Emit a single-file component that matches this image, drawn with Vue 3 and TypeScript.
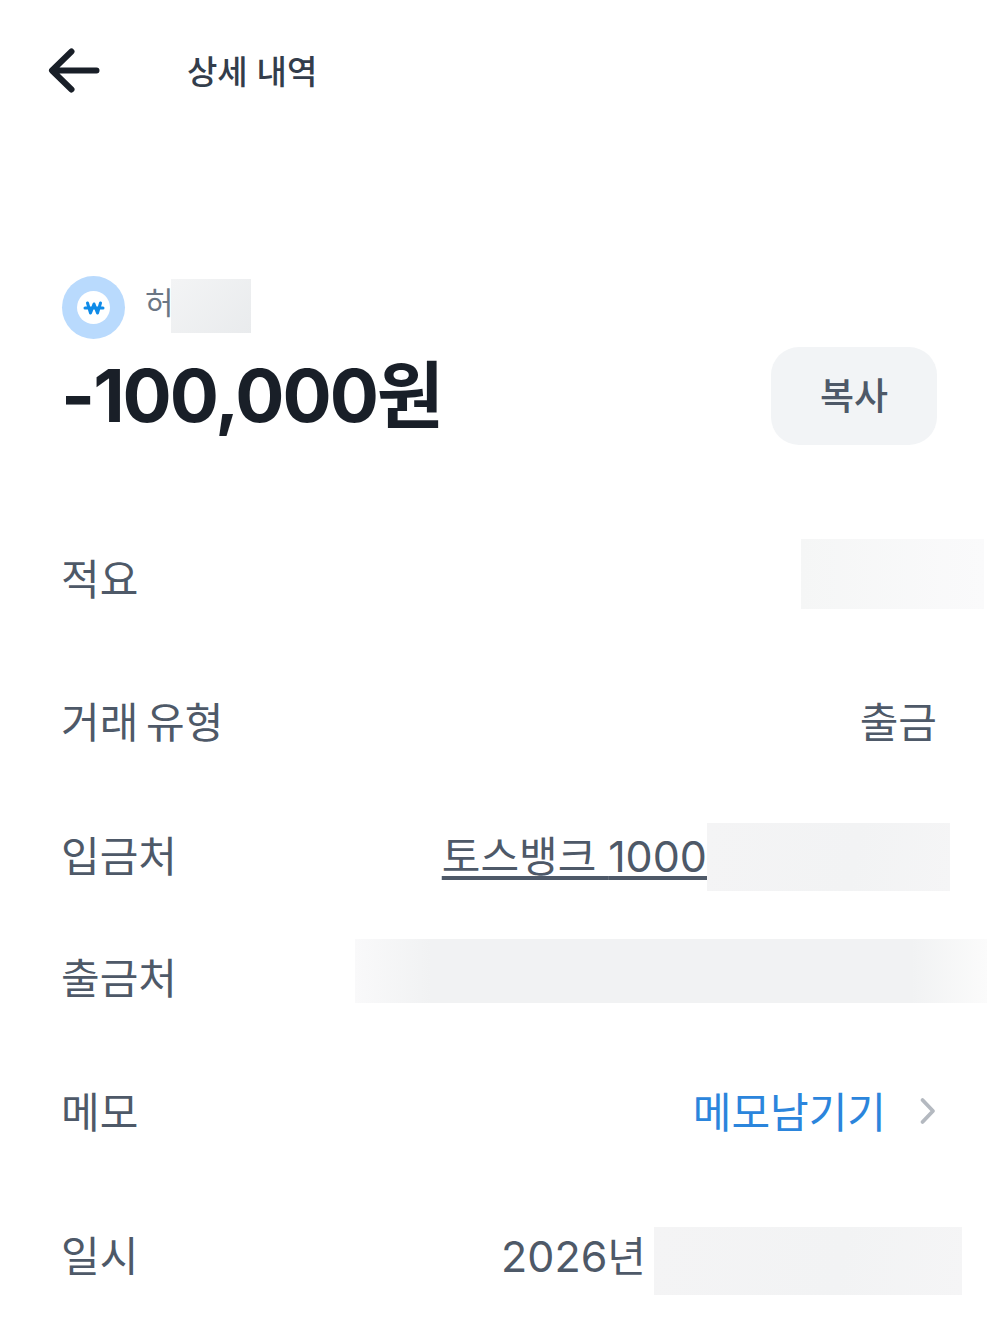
<script setup lang="ts">
interface Row {
  label: string
  kind: string
  height: number
}

const rows: Row[] = [
  { label: '적요', kind: 'summary', height: 134 },
  { label: '거래 유형', kind: 'type', height: 152 },
  { label: '입금처', kind: 'to', height: 116 },
  { label: '출금처', kind: 'from', height: 129 },
  { label: '메모', kind: 'memo', height: 138 },
  { label: '일시', kind: 'date', height: 150 },
]
</script>

<template>
  <div class="page">
    <header class="topbar">
      <button class="back" aria-label="뒤로">
        <svg width="52" height="46" viewBox="0 0 52 46" fill="none">
          <path d="M23.5 4.5 4 23.5l19.5 19M6 23.5H48.5" stroke="#191f28" stroke-width="6" stroke-linecap="round" stroke-linejoin="round" />
        </svg>
      </button>
      <h1>상세 내역</h1>
    </header>

    <section class="summary">
      <div class="account">
        <span class="badge">
          <span class="badge-inner">
            <svg width="22" height="16" viewBox="0 0 22 16" fill="none">
              <path d="M2 8h18M4.5 3 7.5 13 11 4l3.5 9 3-10" stroke="#0f8be8" stroke-width="3" stroke-linecap="round" stroke-linejoin="round" />
            </svg>
          </span>
        </span>
        <span class="account-name">허<span class="blur blur-name"></span></span>
      </div>
      <div class="amount-row">
        <strong class="amount">-100,000원</strong>
        <button class="copy">복사</button>
      </div>
    </section>

    <dl class="details">
      <div v-for="row in rows" :key="row.kind" class="row" :style="{ height: row.height + 'px' }">
        <dt>{{ row.label }}</dt>
        <dd>
          <span v-if="row.kind === 'summary'" class="blur blur-summary"></span>
          <template v-else-if="row.kind === 'type'">출금</template>
          <span v-else-if="row.kind === 'to'" class="inline">
            <span class="link">토스뱅크 <span class="num">1000</span></span><span class="blur blur-to"></span>
          </span>
          <span v-else-if="row.kind === 'from'" class="blur blur-from"></span>
          <span v-else-if="row.kind === 'memo'" class="memo">
            메모남기기
            <svg width="18" height="30" viewBox="0 0 18 30" fill="none">
              <path d="M3.5 4 14 15 3.5 26" stroke="#b4b9c0" stroke-width="3.8" stroke-linecap="round" stroke-linejoin="round" />
            </svg>
          </span>
          <span v-else class="inline">
            <span><span class="num">2026</span>년</span><span class="blur blur-date"></span>
          </span>
        </dd>
      </div>
    </dl>
  </div>
</template>

<style scoped>
.page {
  width: 1000px;
  height: 1333px;
  overflow: hidden;
  background: #fff;
  color: #4e5968;
  font-family: Inter, "Noto Sans CJK KR", sans-serif;
}

.topbar {
  display: flex;
  align-items: center;
  height: 46px;
  padding: 47px 0 0 48px;
}

.back {
  display: flex;
  padding: 0;
  border: 0;
  background: none;
}

h1 {
  margin: 0 0 0 87px;
  font-size: 33px;
  font-weight: 500;
  color: #333d4b;
}

.summary {
  padding: 183px 63px 0 62px;
}

.account {
  display: flex;
  align-items: center;
  gap: 20px;
}

.badge {
  display: flex;
  align-items: center;
  justify-content: center;
  width: 63px;
  height: 63px;
  border-radius: 50%;
  background: #b9dafd;
}

.badge-inner {
  display: flex;
  align-items: center;
  justify-content: center;
  width: 33px;
  height: 33px;
  border-radius: 50%;
  background: #fff;
}

.account-name {
  position: relative;
  margin-bottom: 14px;
  font-size: 31px;
  color: #6b7684;
}

.amount-row {
  display: flex;
  align-items: center;
  justify-content: space-between;
  height: 106px;
  margin-top: 4px;
}

.amount {
  margin-left: -1px;
  padding-bottom: 12px;
  font-size: 73px;
  font-weight: 700;
  letter-spacing: -2px;
  color: #191f28;
}

.copy {
  width: 166px;
  height: 98px;
  padding: 0 0 4px;
  border: 0;
  border-radius: 28px;
  background: #f2f4f6;
  font: 500 37px Inter, "Noto Sans CJK KR", sans-serif;
  color: #4e5968;
}

.details {
  margin: 60px 0 0;
  padding: 0 63px 0 61px;
}

.row {
  display: flex;
  align-items: center;
  justify-content: space-between;
  font-size: 42px;
}

dt {
  word-spacing: -4px;
}

dd {
  position: relative;
  display: flex;
  justify-content: flex-end;
  margin: 0;
}

.inline {
  display: flex;
  align-items: center;
}

.num {
  font-size: 43px;
}

.link {
  text-decoration: underline;
  text-underline-offset: 4px;
  text-decoration-thickness: 4px;
}

.memo {
  display: flex;
  align-items: center;
  gap: 33px;
  color: #2b85dc;
}

.memo svg {
  margin-top: 4px;
}

.blur {
  display: block;
  background: linear-gradient(100deg, #f4f4f5, #f2f3f4 60%, #f5f5f6);
}

.blur-name {
  position: absolute;
  top: 1px;
  left: 26px;
  width: 80px;
  height: 54px;
  background: linear-gradient(135deg, #f3f4f5, #e9ebed);
}

.blur-summary {
  position: absolute;
  top: -37px;
  right: -47px;
  width: 183px;
  height: 70px;
  background: linear-gradient(90deg, #f5f6f6, #fafafb);
}

.blur-to {
  width: 243px;
  height: 68px;
  margin-top: 8px;
  margin-right: -13px;
}

.blur-from {
  position: absolute;
  top: -37px;
  right: -50px;
  width: 632px;
  height: 64px;
  background: linear-gradient(90deg, #f9f9fa, #f1f2f3 12%, #f1f2f3 88%, #fbfbfb);
}

.blur-date {
  width: 308px;
  height: 68px;
  margin-top: 16px;
  margin-left: 8px;
  margin-right: -25px;
}
</style>

<style>
html,
body {
  background: #fff;
}
</style>
